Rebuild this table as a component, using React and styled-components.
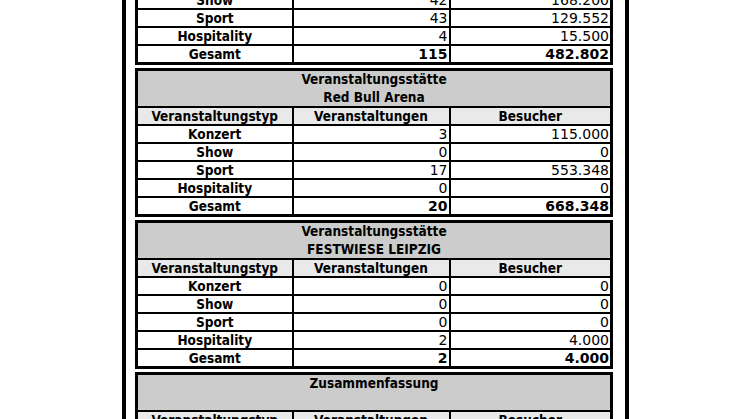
import React from "react";
import styled, { createGlobalStyle } from "styled-components";

const GlobalStyle = createGlobalStyle`
  html, body {
    margin: 0;
    padding: 0;
    background: #ffffff;
    height: 100%;
    overflow: hidden;
  }
  body {
    font-family: "DejaVu Sans Condensed", "DejaVu Sans", sans-serif;
    color: #000000;
  }
`;

const Page = styled.div`
  padding-left: 122px;
`;

const Frame = styled.div`
  width: 478px;
  border-left: 4px solid #000;
  border-right: 4px solid #000;
  margin-top: -84px;
  padding: 0 12px 40px 9px;
  box-sizing: content-box;
  display: flex;
  flex-direction: column;
  gap: 3px;
`;

const Table = styled.table`
  width: 478px;
  border-collapse: collapse;
  border: 3px solid #000;
  table-layout: fixed;
  font-size: 13.5px;
`;

const TitleCell = styled.td`
  background: #cccccc;
  font-weight: bold;
  text-align: center;
  height: 35px;
  line-height: 17.5px;
  padding: 0;
  border: 2px solid #000;
`;

const HeadCell = styled.td`
  background: #e9e9e9;
  font-weight: bold;
  text-align: center;
  height: 16px;
  line-height: 16px;
  padding: 0;
  border: 2px solid #000;
`;

const Cell = styled.td`
  height: 16px;
  line-height: 16px;
  padding: 0 1px 0 0;
  border: 2px solid #000;
  white-space: nowrap;
  overflow: hidden;
  text-align: right;
  font-family: "DejaVu Sans", sans-serif;
  font-size: 14px;
  font-weight: ${(p) => (p.$bold ? "bold" : "normal")};
`;

const LabelCell = styled.td`
  height: 16px;
  line-height: 16px;
  padding: 0;
  border: 2px solid #000;
  white-space: nowrap;
  text-align: center;
  font-weight: bold;
`;

const venues = [
  {
    title: ["Veranstaltungsstätte", "Arena Leipzig"],
    rows: [
      ["Konzert", "26", "169.550"],
      ["Show", "42", "168.200"],
      ["Sport", "43", "129.552"],
      ["Hospitality", "4", "15.500"],
    ],
    total: ["115", "482.802"],
  },
  {
    title: ["Veranstaltungsstätte", "Red Bull Arena"],
    rows: [
      ["Konzert", "3", "115.000"],
      ["Show", "0", "0"],
      ["Sport", "17", "553.348"],
      ["Hospitality", "0", "0"],
    ],
    total: ["20", "668.348"],
  },
  {
    title: ["Veranstaltungsstätte", "FESTWIESE LEIPZIG"],
    rows: [
      ["Konzert", "0", "0"],
      ["Show", "0", "0"],
      ["Sport", "0", "0"],
      ["Hospitality", "2", "4.000"],
    ],
    total: ["2", "4.000"],
  },
  {
    title: ["Zusammenfassung", "\u00a0"],
    rows: [
      ["Konzert", "29", "284.550"],
      ["Show", "42", "168.200"],
      ["Sport", "60", "682.900"],
      ["Hospitality", "6", "19.500"],
    ],
    total: ["137", "1.155.150"],
  },
];

const VenueTable = ({ title, rows, total }) => (
  <Table>
    <colgroup>
      <col style={{ width: "156px" }} />
      <col style={{ width: "157px" }} />
      <col />
    </colgroup>
    <tbody>
      <tr>
        <TitleCell colSpan={3}>
          {title[0]}
          <br />
          {title[1]}
        </TitleCell>
      </tr>
      <tr>
        <HeadCell>Veranstaltungstyp</HeadCell>
        <HeadCell>Veranstaltungen</HeadCell>
        <HeadCell>Besucher</HeadCell>
      </tr>
      {rows.map((r) => (
        <tr key={r[0]}>
          <LabelCell>{r[0]}</LabelCell>
          <Cell>{r[1]}</Cell>
          <Cell>{r[2]}</Cell>
        </tr>
      ))}
      <tr>
        <LabelCell>Gesamt</LabelCell>
        <Cell $bold>{total[0]}</Cell>
        <Cell $bold>{total[1]}</Cell>
      </tr>
    </tbody>
  </Table>
);

export default function App() {
  return (
    <>
      <GlobalStyle />
      <Page>
        <Frame>
          {venues.map((v) => (
            <VenueTable key={v.title[1] + v.title[0]} {...v} />
          ))}
        </Frame>
      </Page>
    </>
  );
}
